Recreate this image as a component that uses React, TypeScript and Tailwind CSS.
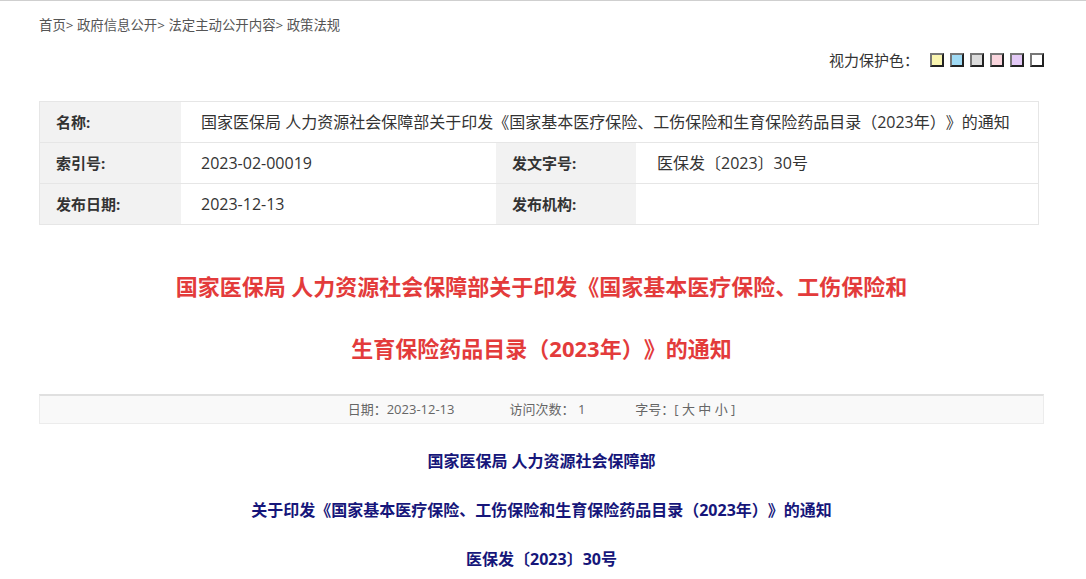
import React from 'react';

const swatches = ['#f9f5b0', '#a0dbf5', '#dcdcdc', '#f9d5dd', '#e3c9f6', '#ffffff'];

const App: React.FC = () => {
  return (
    <div className="min-h-[579px] bg-white border-t border-[#cfcfcf] text-[#333] font-['Open_Sans','Noto_Sans_CJK_SC',sans-serif] [text-spacing-trim:space-all]">
      <div className="w-[1005px] ml-[39px]">
        {/* breadcrumb */}
        <div className="pt-[15px] text-[13.4px] leading-[18px] text-[#555]">
          首页&gt; 政府信息公开&gt; 法定主动公开内容&gt; 政策法规
        </div>

        {/* eye-care colours */}
        <div className="mt-[15px] flex items-center justify-end h-[22px]">
          <span className="text-[15px] text-[#333] mr-[11px]">视力保护色：</span>
          <div className="flex gap-[6px]">
            {swatches.map((c) => (
              <span
                key={c}
                className="block w-[14px] h-[14px] border-2 border-t-[#777] border-l-[#777] border-b-[#222] border-r-[#222]"
                style={{ backgroundColor: c }}
              />
            ))}
          </div>
        </div>

        {/* meta table */}
        <div className="mt-[30px] w-[1000px] border border-[#e6e6e6] leading-[40px]">
          <div className="flex border-b border-[#e6e6e6]">
            <div className="w-[141px] bg-[#f2f2f2] pl-[16px] font-bold text-[15px]">名称:</div>
            <div className="flex-1 pl-[20px] text-[16px]">国家医保局 人力资源社会保障部关于印发《国家基本医疗保险、工伤保险和生育保险药品目录（2023年）》的通知</div>
          </div>
          <div className="flex border-b border-[#e6e6e6]">
            <div className="w-[141px] bg-[#f2f2f2] pl-[16px] font-bold text-[15px]">索引号:</div>
            <div className="w-[315px] pl-[20px] text-[16px]">2023-02-00019</div>
            <div className="w-[140px] bg-[#f2f2f2] pl-[16px] font-bold text-[15px]">发文字号:</div>
            <div className="flex-1 pl-[21px] text-[16px]">医保发〔2023〕30号</div>
          </div>
          <div className="flex">
            <div className="w-[141px] bg-[#f2f2f2] pl-[16px] font-bold text-[15px]">发布日期:</div>
            <div className="w-[315px] pl-[20px] text-[16px]">2023-12-13</div>
            <div className="w-[140px] bg-[#f2f2f2] pl-[16px] font-bold text-[15px]">发布机构:</div>
            <div className="flex-1 pl-[21px]"></div>
          </div>
        </div>

        {/* title */}
        <h1 className="mt-[30px] mx-auto w-[745px] text-center text-[22px] leading-[62px] font-bold text-[#e33b3b]">
          国家医保局 人力资源社会保障部关于印发《国家基本医疗保险、工伤保险和生育保险药品目录（2023年）》的通知
        </h1>

        {/* info bar */}
        <div className="mt-[15px] h-[30px] bg-[#f9f9f9] border border-[#ececec] border-t-2 border-t-[#e0e0e0] flex items-center justify-center text-[13px] text-[#666]">
          <span>日期：2023-12-13</span>
          <span className="ml-[55px]">访问次数： 1</span>
          <span className="ml-[50px]">字号：[ 大 中 小 ]</span>
        </div>

        {/* body */}
        <div className="mt-[13px] text-center text-[16px] font-bold text-[#16167a] leading-[49px]">
          <p>国家医保局 人力资源社会保障部</p>
          <p>关于印发《国家基本医疗保险、工伤保险和生育保险药品目录（2023年）》的通知</p>
          <p>医保发〔2023〕30号</p>
        </div>
      </div>
    </div>
  );
};

export default App;
